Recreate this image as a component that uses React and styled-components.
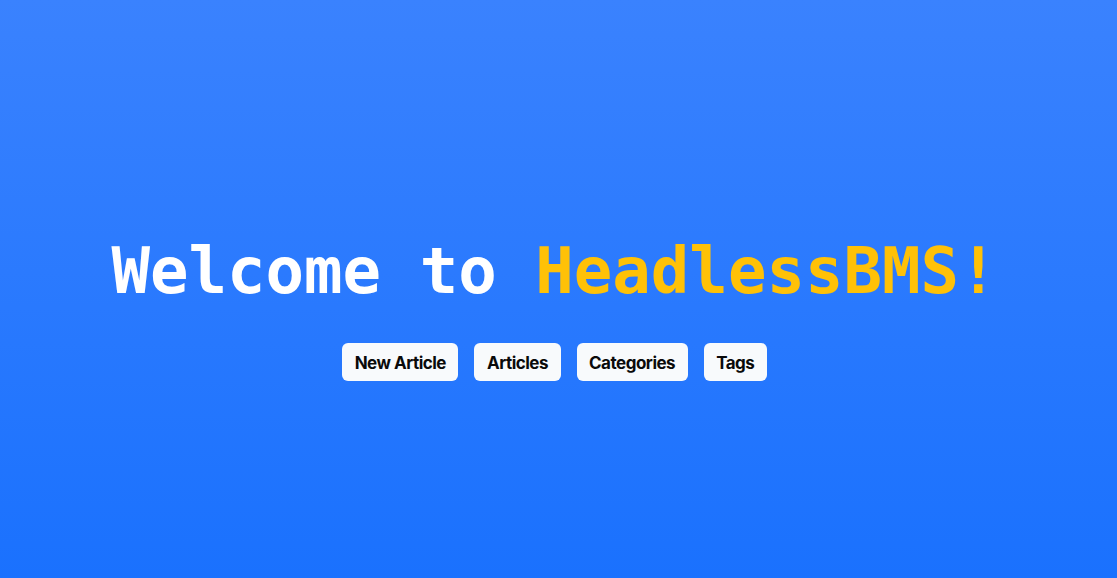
import React from 'react';
import styled, { createGlobalStyle } from 'styled-components';

const GlobalStyle = createGlobalStyle`
  html, body {
    margin: 0;
    padding: 0;
  }
  body {
    font-family: 'Inter', 'Liberation Sans', sans-serif;
  }
`;

const Page = styled.main`
  min-height: 100vh;
  background: linear-gradient(180deg, #3a82fe 0%, #1a71fe 100%);
  display: flex;
  flex-direction: column;
  align-items: center;
  justify-content: center;
  padding: 42px 8px 0 0;
  box-sizing: border-box;
`;

const Title = styled.h1`
  font-family: 'DejaVu Sans Mono', monospace;
  font-weight: 700;
  font-size: 64px;
  line-height: 1;
  color: #ffffff;
  margin: 0 0 40px 0;
  white-space: nowrap;
`;

const Brand = styled.span`
  color: #ffc107;
`;

const Nav = styled.nav`
  display: flex;
  gap: 16px;
`;

const NavButton = styled.a`
  display: inline-flex;
  align-items: center;
  height: 38px;
  padding: 1px 12.5px 0;
  box-sizing: border-box;
  border-radius: 6px;
  background: #f8fafc;
  color: #0a0a0a;
  font-family: 'Inter', sans-serif;
  font-weight: 700;
  font-size: 17px;
  letter-spacing: -0.5px;
  text-decoration: none;
  cursor: pointer;
`;

const links = ['New Article', 'Articles', 'Categories', 'Tags'];

export default function App() {
  return (
    <>
      <GlobalStyle />
      <Page>
        <Title>
          Welcome to <Brand>HeadlessBMS!</Brand>
        </Title>
        <Nav>
          {links.map((l) => (
            <NavButton key={l}>{l}</NavButton>
          ))}
        </Nav>
      </Page>
    </>
  );
}
